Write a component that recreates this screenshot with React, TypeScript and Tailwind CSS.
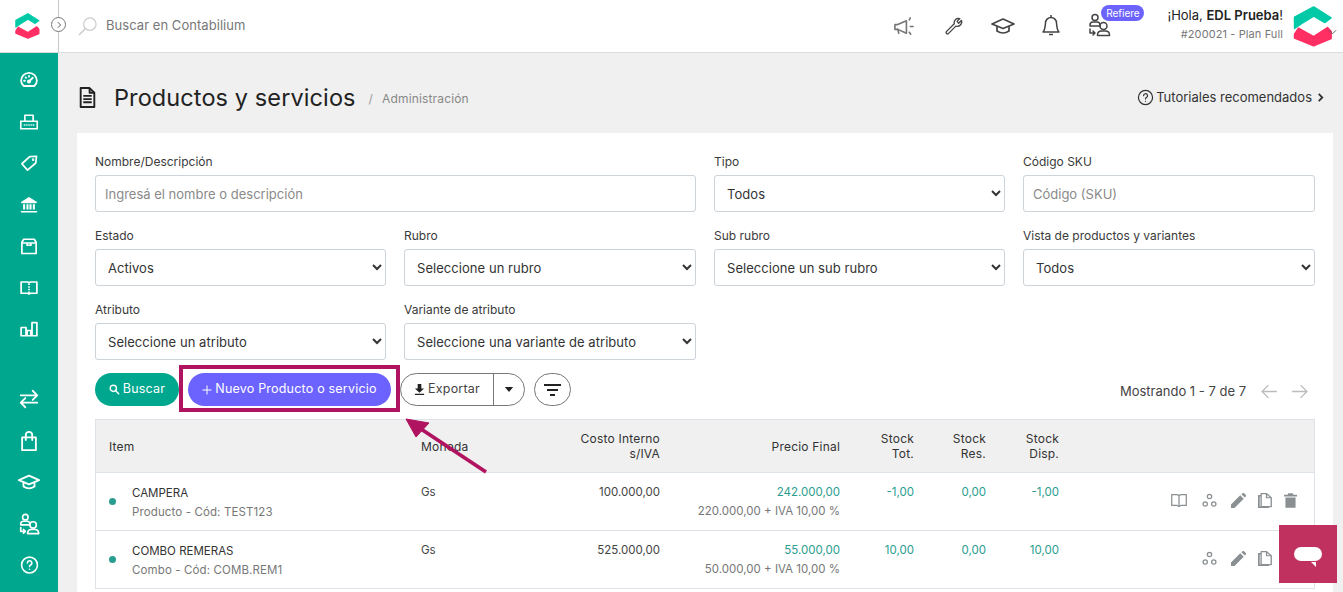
import React from "react";

const font = { fontFamily: "Inter, 'Liberation Sans', sans-serif" };

function Logo({ className }: { className: string }) {
  return (
    <svg viewBox="22 15 122 127" className={className} strokeWidth="5" strokeLinejoin="round">
      <path d="M85 18 L139 52 L120 66 L85 46 L46 70 L26 84 L26 50 Z" fill="#00c9a7" stroke="#00c9a7" />
      <path d="M26 102 L38 84 L85 110 L128 82 L139 94 L139 116 L85 138 L26 114 Z" fill="#ff2e63" stroke="#ff2e63" />
    </svg>
  );
}

type IP = { className?: string };
const S = ({ className, children, w = 1.6, box = "0 0 24 24" }: IP & { children: React.ReactNode; w?: number; box?: string }) => (
  <svg viewBox={box} fill="none" stroke="currentColor" strokeWidth={w} strokeLinecap="round" strokeLinejoin="round" className={className}>
    {children}
  </svg>
);

const Gauge = (p: IP) => (
  <S {...p} w={2.4}>
    <path d="M5 20 Q1.500 17 1.500 13 A10.500 10.500 0 0 1 22.500 13 Q22.500 17 19 20 Z" />
    <path d="M12 14 L17 9" />
    <circle cx="12" cy="14" r="1.500" />
    <path d="M5.500 13h1M12 6.500v1M7.500 8.500l.5.5" />
  </S>
);
const Printer = (p: IP) => (
  <S {...p} w={2.2}>
    <path d="M6.500 11V3h11v8" />
    <path d="M1 11h22v10H1z" />
    <path d="M5 16h14" strokeDasharray="1.500 1" strokeLinecap="butt" />
  </S>
);
const Tag = (p: IP) => (
  <S {...p} w={2.3}>
    <path d="M13 3.500 22 3 21 12 10 21.500 2.500 13z" />
    <circle cx="17.500" cy="7.500" r=".6" />
  </S>
);
const Bank = (p: IP) => (
  <S {...p} w={2.2}>
    <path d="M2.500 8.500 L12 2.500 L21.500 8.500 Z" fill="currentColor" />
    <path d="M5.500 11v7M10 11v7M14 11v7M18.500 11v7" strokeWidth="2.800" strokeLinecap="butt" />
    <path d="M2 21h20" />
  </S>
);
const Box = (p: IP) => (
  <S {...p} w={2.3}>
    <path d="M5 3h14l2.500 4v15h-19V7z" />
    <path d="M2.500 8h19M9.500 8v3h5V8" />
  </S>
);
const Book = (p: IP) => (
  <S {...p} w={2.3}>
    <path d="M1.500 4h8.500l2 1 2-1h8.500v15H14l-2 1-2-1H1.500z" />
    <path d="M12 6v14" strokeDasharray="2 1.500" strokeLinecap="butt" />
  </S>
);
const BookPlain = (p: IP) => (
  <S {...p} w={1.700} box="1 3 22 18">
    <path d="M2 4.500h7.500l2.500 1.500 2.500-1.500H22v15h-7.500L12 21l-2.500-1.500H2z" />
    <path d="M12 6v15" />
  </S>
);
const Bars = (p: IP) => (
  <S {...p} w={2.3}>
    <path d="M1.500 10h6.500v11H1.500zM9.500 14h5v7h-5zM16 3.500h6.500V21H16z" />
  </S>
);
const Arrows = (p: IP) => (
  <S {...p} w={2}>
    <path d="M3 8h18M16 3l5 5-5 5M21 16H3M8 11l-5 5 5 5" />
  </S>
);
const Bag = (p: IP) => (
  <S {...p} w={2}>
    <path d="M4.500 8h15v14h-15z" />
    <path d="M8.500 11V5.500a3.500 3.500 0 0 1 7 0V11" />
  </S>
);
const Grad = (p: IP & { w?: number }) => (
  <S {...p} w={p.w ?? 2}>
    <path d="M1 10 L12 5 L23 10 L12 14.500 Z" />
    <path d="M6 12.500v4.500q6 4 12 0v-4.500" />
  </S>
);
const Refer = (p: IP & { w?: number }) => (
  <S {...p} w={p.w ?? 1.800}>
    <circle cx="8" cy="4.500" r="3" />
    <path d="M3 13v-1a3 3 0 0 1 3-3h4a3 3 0 0 1 3 3v1H3" />
    <circle cx="16.500" cy="13" r="3.500" />
    <path d="M10.500 22.500v-1a4 4 0 0 1 4-3.500h4a4 4 0 0 1 4 3.500v1z" />
    <path d="M3 16v4h5M6 18l2 2-2 2" />
  </S>
);
const Help = (p: IP & { w?: number }) => (
  <S {...p} w={p.w ?? 2}>
    <circle cx="12" cy="12" r="10" />
    <path d="M9.300 9.500a2.800 2.800 0 1 1 4 2.500c-.9.500-1.300 1-1.300 2" />
    <path d="M12 17.300v.1" />
  </S>
);
const Nodes = (p: IP) => (
  <S {...p} w={1.800} box="1.500 2 21 19">
    <circle cx="12" cy="6" r="3" />
    <circle cx="6" cy="16.500" r="3" />
    <circle cx="18" cy="16.500" r="3" />
  </S>
);
const Pencil = (p: IP) => (
  <svg viewBox="3 1.500 19.500 19.500" fill="currentColor" className={p.className}>
    <path d="M3 21v-4.500L15 4.500 19.500 9 7.500 21zM16.500 3l1.500-1.200a1.500 1.500 0 0 1 2 0l2.200 2.200a1.500 1.500 0 0 1 0 2L21 7.500z" />
  </svg>
);
const Copy = (p: IP) => (
  <svg viewBox="3 1 18 22" preserveAspectRatio="none" fill="none" stroke="currentColor" strokeWidth="1.700" strokeLinejoin="round" className={p.className}>
    <path d="M7 2h7l6 6v13H7z" />
    <path d="M14 2v6h6" />
    <path d="M7 5H4v17h12v-1" strokeWidth="2.400" />
  </svg>
);
const Trash = (p: IP) => (
  <svg viewBox="3 2 18 20" fill="currentColor" className={p.className}>
    <path d="M9 2h6l1 2h5v2.500H3V4h5zM5 8h14v14H5z" />
  </svg>
);

function Field({ label, children, className = "" }: { label: string; children: React.ReactNode; className?: string }) {
  return (
    <div className={className}>
      <label className="block text-[12px] leading-[15px] text-[#3a3a3a] mb-[6px] tracking-normal">{label}</label>
      {children}
    </div>
  );
}
function Sel({ value }: { value: string }) {
  return (
    <select
      defaultValue={value}
      style={font}
      className="block w-full h-[37px] border border-[#ccd3d9] rounded-[3px] bg-white pl-[8px] text-[13px] text-[#333] tracking-[0.05px]"
    >
      <option>{value}</option>
    </select>
  );
}
function Inp({ placeholder }: { placeholder: string }) {
  return (
    <input
      placeholder={placeholder}
      style={font}
      className="block w-full h-[37px] border border-[#ccd3d9] rounded-[3px] bg-white px-[9px] text-[13px] tracking-normal placeholder:text-[#8a8a8a]"
    />
  );
}

const cols = "grid grid-cols-[325px_100px_139px_180px_74px_72px_73px_1fr]";

function Row({
  name, sub, cost, price, net, tot, res, disp, book,
}: { name: string; sub: string; cost: string; price: string; net: string; tot: string; res: string; disp: string; book?: boolean }) {
  return (
    <div className={`${cols} h-[58px] border-b border-[#dde3e8] bg-white text-[11.5px] leading-[15px] tracking-normal`}>
      <div className="flex items-center pl-[13px]">
        <span className="w-[7px] h-[7px] rounded-full bg-[#2a9d8f] mr-[16px]" />
        <div className="pt-[2px]">
          <div className="text-[#333]">{name}</div>
          <div className="text-[#777] mt-[4px] tracking-[0.12px]">{sub}</div>
        </div>
      </div>
      <div className="pt-[12px] text-[#444]">Gs</div>
      <div className="pt-[12px] text-right text-[#444]">{cost}</div>
      <div className="pt-[12px] text-right">
        <div className="text-[#2a9d8f]">{price}</div>
        <div className="text-[#777] mt-[4px]">{net}</div>
      </div>
      <div className="pt-[12px] text-right text-[#2a9d8f]">{tot}</div>
      <div className="pt-[12px] text-right text-[#2a9d8f]">{res}</div>
      <div className="pt-[12px] text-right text-[#2a9d8f]">{disp}</div>
      <div className="flex items-start justify-end pt-[20px] pr-[17px] text-[#8a8f92]">
        {book && <BookPlain className="w-[16px] h-[14px] mr-[15px]" />}
        <Nodes className="w-[15px] h-[15px]" />
        <Pencil className="w-[15px] h-[15px] ml-[14px]" />
        <Copy className="w-[14px] h-[15px] ml-[12px]" />
        <Trash className="w-[13px] h-[15px] ml-[12px]" />
      </div>
    </div>
  );
}

export default function App() {
  const top = [Gauge, Printer, Tag, Bank, Box, Book, Bars];
  return (
    <div style={font} className="relative w-[1343px] h-[592px] overflow-hidden bg-[#f0f0f0] tracking-[0.2px]">
      {/* Header */}
      <header className="relative flex items-center h-[53px] bg-white border-b border-[#dcdcdc]">
        <div className="relative flex items-center justify-center w-[59px] h-full border-r border-[#c8c8c8]">
          <Logo className="w-[25px] h-[28px] -ml-[4px]" />
          <span className="absolute -right-[8px] top-[17px] flex items-center justify-center w-[15px] h-[15px] rounded-full border border-[#777] bg-white text-[#555]">
            <svg viewBox="0 0 10 10" className="w-[8px] h-[8px]" fill="none" stroke="currentColor" strokeWidth="1.200"><path d="M3.500 1.500 7 5 3.500 8.500" /></svg>
          </span>
        </div>
        <svg viewBox="0 0 20 20" className="w-[19px] h-[19px] ml-[19px] text-[#ccc]" fill="none" stroke="currentColor" strokeWidth="1.300">
          <circle cx="12.500" cy="7.500" r="6.500" />
          <path d="M7.500 12.500 1 19" strokeWidth="1.600" />
        </svg>
        <span className="ml-[9px] text-[13px] text-[#777] tracking-[0.05px]">Buscar en Contabilium</span>
        <div className="flex-1" />
        <div className="flex items-center text-[#444]">
          <svg viewBox="0 0 24 24" className="w-[23px] h-[23px] text-[#777]" fill="none" stroke="currentColor" strokeWidth="1.700" strokeLinejoin="round" strokeLinecap="round">
            <path d="M2 10v5h3l9 4V6l-9 4z" />
            <path d="M5 15l1 4M17 5l1-2M18 12h3M17 18l1.500 2" />
          </svg>
          <svg viewBox="0 0 24 24" className="w-[19px] h-[19px] ml-[28px]" fill="none" stroke="currentColor" strokeWidth="1.700" strokeLinejoin="round">
            <path d="M3 18.500 13 8.500a5.500 5.500 0 0 1 7-6.500l-3.500 3.500 2 2.500L22 4.500a5.500 5.500 0 0 1-7 7L5.500 21a1.800 1.800 0 0 1-2.500-2.500z" />
          </svg>
          <Grad className="w-[24px] h-[24px] ml-[28px]" w={1.700} />
          <svg viewBox="0 0 24 24" className="w-[24px] h-[24px] ml-[24px] -mt-[2px]" fill="none" stroke="currentColor" strokeWidth="1.500" strokeLinejoin="round">
            <path d="M4 19c2-2 2-4 2.500-9a5.500 5.500 0 0 1 11 0c.5 5 .5 7 2.500 9z" />
            <path d="M10 21.500h4M12 2v2" />
          </svg>
          <div className="relative ml-[24px] w-[24px] h-[24px] -mt-[2px]">
            <Refer className="w-[24px] h-[24px]" w={1.500} />
            <span className="absolute -top-[8px] left-[14px] h-[16px] w-[43px] justify-center flex items-center rounded-full bg-[#6c63ff] text-white text-[10px] leading-none tracking-normal">Refiere</span>
          </div>
        </div>
        <div className="ml-[56px] text-right -mt-[5px]">
          <div className="text-[13px] leading-[16px] text-[#222] tracking-normal">¡Hola, <b className="font-semibold">EDL Prueba</b>!</div>
          <div className="text-[11px] leading-[14px] mt-[4px] text-[#777] tracking-[0.1px]">#200021 - Plan Full</div>
        </div>
        <div className="relative ml-[10px] mr-[10px] w-[40px] h-[41px]">
          <Logo className="w-[40px] h-[41px]" />
          <svg viewBox="0 0 10 6" className="absolute left-[35px] top-[23px] w-[9px] h-[6px] text-[#555]" fill="none" stroke="currentColor"><path d="M1 1l4 4 4-4" /></svg>
        </div>
      </header>

      <div className="flex h-[539px]">
        {/* Sidebar */}
        <aside className="flex flex-col items-center w-[58px] shrink-0 bg-[#00a78f] text-white pt-[18px]">
          <div className="flex flex-col gap-[23.5px]">
            {top.map((I, i) => <I key={i} className="w-[18px] h-[18px]" />)}
          </div>
          <div className="flex flex-col items-center gap-[19.5px] mt-[50px]">
            <Arrows className="w-[22px] h-[22px]" />
            <Bag className="w-[22px] h-[22px]" />
            <Grad className="w-[22px] h-[22px]" />
            <Refer className="w-[22px] h-[22px]" />
            <Help className="w-[19px] h-[22px]" />
          </div>
        </aside>

        {/* Main */}
        <main className="flex-1 pl-[19px] pr-[10px]">
          <div className="flex items-center justify-between h-[80px] pt-[9px] pr-[8px]">
            <div className="flex items-center">
              <svg viewBox="0 0 16 20" className="ml-[2px] w-[17px] h-[21px] text-[#222]" fill="none" stroke="currentColor" strokeWidth="1.800" strokeLinejoin="round">
                <path d="M1.500 1h8.500l4.500 4.500V19h-13z" />
                <path d="M10 1v4.500h4.500M4 8.500h8M4 11.500h8M4 14.500h8" />
              </svg>
              <h1 className="ml-[18px] text-[23.5px] leading-[28px] font-normal text-[#222] tracking-[0.1px]">Productos y servicios</h1>
              <span className="ml-[13px] mt-[2px] text-[12px] text-[#999]">/</span>
              <span className="ml-[9px] mt-[2px] text-[12px] text-[#888] tracking-[0.15px]">Administración</span>
            </div>
            <div className="flex items-center text-[13px] text-[#333] tracking-normal">
              <Help className="w-[17px] h-[17px] mr-[2px]" w={1.700} />
              Tutoriales recomendados
              <svg viewBox="0 0 10 10" className="ml-[4px] w-[9px] h-[9px]" fill="none" stroke="currentColor" strokeWidth="2"><path d="M3 1l4 4-4 4" /></svg>
            </div>
          </div>

          <section className="bg-white pt-[21px] px-[18px] h-[460px]">
            <div className="grid grid-cols-[291px_292px_291px_292px] gap-x-[18px] gap-y-[16px]">
              <Field label="Nombre/Descripción" className="col-span-2"><Inp placeholder="Ingresá el nombre o descripción" /></Field>
              <Field label="Tipo"><Sel value="Todos" /></Field>
              <Field label="Código SKU"><Inp placeholder="Código (SKU)" /></Field>
              <Field label="Estado"><Sel value="Activos" /></Field>
              <Field label="Rubro"><Sel value="Seleccione un rubro" /></Field>
              <Field label="Sub rubro"><Sel value="Seleccione un sub rubro" /></Field>
              <Field label="Vista de productos y variantes"><Sel value="Todos" /></Field>
              <Field label="Atributo"><Sel value="Seleccione un atributo" /></Field>
              <Field label="Variante de atributo"><Sel value="Seleccione una variante de atributo" /></Field>
            </div>

            <div className="flex items-center h-[33px] mt-[13px]">
              <button className="flex items-center justify-center w-[84px] h-[33px] rounded-full bg-[#00a78f] text-white text-[12.5px]">
                <svg viewBox="0 0 14 14" className="w-[11px] h-[11px] mr-[3px]" fill="none" stroke="currentColor" strokeWidth="1.800"><circle cx="5.500" cy="5.500" r="4" /><path d="M8.500 8.500 13 13" /></svg>
                Buscar
              </button>
              <button className="ml-[9px] flex items-center justify-center w-[203px] h-[33px] rounded-full bg-[#6c63ff] text-white text-[12.5px]">
                <svg viewBox="0 0 10 10" className="w-[10px] h-[10px] mr-[3px]" fill="none" stroke="currentColor" strokeWidth="1"><path d="M5 .5v9M.5 5h9" /></svg>
                Nuevo Producto o servicio
              </button>
              <div className="ml-[9px] flex items-center w-[125px] h-[33px] rounded-full border border-[#777] bg-white text-[12.5px] text-[#444]">
                <div className="flex items-center justify-center w-[93px] h-full border-r border-[#777]">
                  <svg viewBox="0 0 12 12" className="w-[11px] h-[11px] mr-[3px] text-[#222]" fill="currentColor"><path d="M4 0h4v5h3L6 9.500 1 5h3zM1 10.500h10V12H1z" /></svg>
                  Exportar
                </div>
                <svg viewBox="0 0 10 6" className="ml-[10px] w-[10px] h-[5px] text-[#222]" fill="currentColor"><path d="M0 0h10L5 6z" /></svg>
              </div>
              <div className="ml-[9px] flex flex-col items-center justify-center gap-[3px] w-[37px] h-[33px] rounded-full border border-[#777] bg-white">
                <span className="w-[17px] h-[2px] bg-[#222]" />
                <span className="w-[11px] h-[2px] bg-[#222]" />
                <span className="w-[5px] h-[2px] bg-[#222]" />
              </div>
              <div className="flex-1" />
              <span className="text-[13px] text-[#444] tracking-normal pt-[4px]">Mostrando 1 - 7 de 7</span>
              <svg viewBox="0 0 16 16" className="ml-[15px] mt-[4px] w-[17px] h-[17px] text-[#bbb]" fill="none" stroke="currentColor" strokeWidth="1.200"><path d="M15 8H1M7 2 1 8l6 6" /></svg>
              <svg viewBox="0 0 16 16" className="ml-[13px] mr-[7px] mt-[4px] w-[17px] h-[17px] text-[#bbb]" fill="none" stroke="currentColor" strokeWidth="1.200"><path d="M1 8h14M9 2l6 6-6 6" /></svg>
            </div>

            <div className="mt-[13px] border-x border-t border-[#dde3e8]">
              <div className={`${cols} h-[53px] bg-[#f0f0f0] border-b border-[#dde3e8] text-[12px] leading-[15px] text-[#333] items-center`}>
                <div className="pl-[13px]">Item</div>
                <div>Moneda</div>
                <div className="text-right">Costo Interno<br />s/IVA</div>
                <div className="text-right">Precio Final</div>
                <div className="text-right">Stock<br />Tot.</div>
                <div className="text-right">Stock<br />Res.</div>
                <div className="text-right">Stock<br />Disp.</div>
                <div />
              </div>
              <Row book name="CAMPERA" sub="Producto - Cód: TEST123" cost="100.000,00" price="242.000,00" net="220.000,00 + IVA 10,00 %" tot="-1,00" res="0,00" disp="-1,00" />
              <Row name="COMBO REMERAS" sub="Combo - Cód: COMB.REM1" cost="525.000,00" price="55.000,00" net="50.000,00 + IVA 10,00 %" tot="10,00" res="0,00" disp="10,00" />
            </div>
          </section>
        </main>
      </div>

      {/* Annotation */}
      <div className="absolute left-[179px] top-[365px] w-[221px] h-[47px] border-[4px] border-[#b0135f]" />
      <svg className="absolute left-[400px] top-[412px] w-[95px] h-[70px]" viewBox="0 0 95 70">
        <path d="M86 60 L21 17" stroke="#b0135f" strokeWidth="3.800" />
        <path d="M6 7 L29 11 L16 25 Z" fill="#b0135f" stroke="#b0135f" strokeWidth="1" />
      </svg>

      {/* Chat */}
      <div className="absolute left-[1279px] top-[525px] w-[58px] h-[58px] flex items-center justify-center bg-[#c1315f]">
        <div className="relative w-[28px] h-[14px] rounded-[7px] bg-white">
          <span className="absolute left-[17px] top-[15px] w-0 h-0 border-l-[5px] border-l-transparent border-t-[5px] border-t-white" />
        </div>
      </div>
    </div>
  );
}
